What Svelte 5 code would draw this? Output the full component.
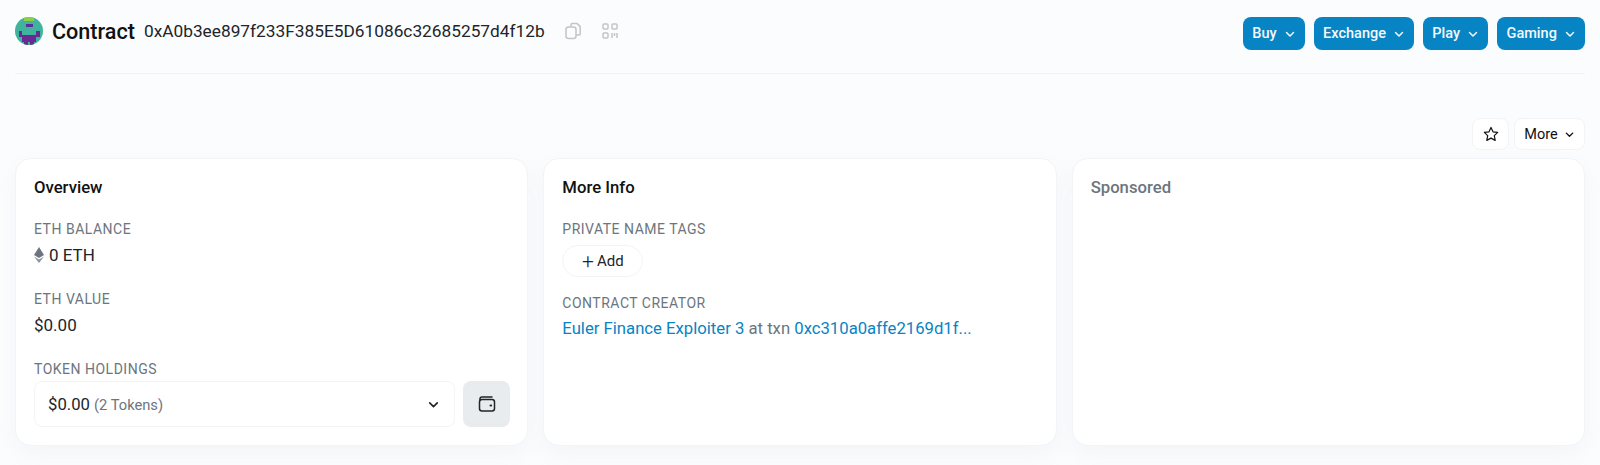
<script lang="ts">
  const menus = ['Buy', 'Exchange', 'Play', 'Gaming'];
</script>

{#snippet chevron(size: number)}
  <svg class="chev" width={size} height={size} viewBox="0 0 12 12" fill="none" stroke="currentColor" stroke-width="1.5" stroke-linecap="round" stroke-linejoin="round"><path d="M2.5 4.5 6 8l3.5-3.5" /></svg>
{/snippet}

<div class="page">
  <header class="top">
    <div class="title">
      <svg class="avatar" width="28" height="28" viewBox="0 0 8 8" shape-rendering="crispEdges">
        <defs><clipPath id="round"><circle cx="4" cy="4" r="4" /></clipPath></defs>
        <g clip-path="url(#round)">
          <rect width="8" height="8" fill="#3fb39b" />
          <rect x="2.5" y="0" width="3" height="1" fill="#8ccf45" />
          <rect x="3" y="2" width="2" height=".8" fill="#5b2d9a" />
          <rect x="1" y="4" width="1" height="1.6" fill="#6a2a94" />
          <rect x="6" y="4" width="1" height="1.6" fill="#6a2a94" />
          <rect x="2" y="5" width="4" height="2" fill="#6a2a94" />
          <rect x="2.6" y="7" width="1" height="1" fill="#6a2a94" />
          <rect x="4.4" y="7" width="1" height="1" fill="#6a2a94" />
        </g>
      </svg>
      <h1>Contract</h1>
      <span class="addr">0xA0b3ee897f233F385E5D61086c32685257d4f12b</span>
      <svg class="tool first" width="20" height="20" viewBox="0 0 20 20" fill="none" stroke="#c2c5c9" stroke-width="1.5" stroke-linejoin="round"><path d="M8 6V3.8c0-.7.5-1.2 1.2-1.2h5l3 3v7.2c0 .7-.5 1.2-1.2 1.2H13" /><rect x="3" y="6" width="10" height="11.4" rx="2.5" /></svg>
      <svg class="tool" width="18" height="18" viewBox="0 0 18 18" fill="none" stroke="#c2c5c9" stroke-width="1.5"><rect x="2" y="2" width="5" height="5" rx="1" /><rect x="11" y="2" width="5" height="5" rx="1" /><rect x="2" y="11" width="5" height="5" rx="1" /><path d="M11 11v5M13.5 11v3M16 11v5M13.5 16h.01" /></svg>
    </div>
    <nav class="menus">
      {#each menus as menu}
        <button type="button" class="menu">{menu}{@render chevron(12)}</button>
      {/each}
    </nav>
  </header>

  <div class="actions">
    <button type="button" class="ghost star" aria-label="Favourite">
      <svg width="16" height="16" viewBox="0 0 16 16" fill="none" stroke="#111" stroke-width="1.2" stroke-linejoin="round"><path d="M8 1.4 10 5.8l4.7.6-3.4 3.2.9 4.8L8 12.1l-4.2 2.3.9-4.8L1.300 6.400 6 5.800z" /></svg>
    </button>
    <button type="button" class="ghost more">More{@render chevron(11)}</button>
  </div>

  <section class="cards">
    <article class="card">
      <h2>Overview</h2>
      <div class="label">ETH BALANCE</div>
      <div class="value eth">
        <svg width="10" height="16" viewBox="0 0 10 16"><path d="M5 0 0 8l5 3 5-3z" fill="#6c757e" /><path d="M0 9.500 5 16l5-6.500-5 3z" fill="#8c939a" /></svg>
        0 ETH
      </div>
      <div class="label gap">ETH VALUE</div>
      <div class="value">$0.00</div>
      <div class="label gap">TOKEN HOLDINGS</div>
      <div class="holdings">
        <button type="button" class="select">
          <span>$0.00 <small>(2 Tokens)</small></span>
          {@render chevron(13)}
        </button>
        <button type="button" class="wallet" aria-label="Wallet">
          <svg width="18" height="18" viewBox="0 0 18 18" fill="none" stroke="#212529" stroke-width="1.5" stroke-linejoin="round"><path d="M2 5V4C2 2.900 2.900 2 4 2h10" stroke-linecap="round" /><rect x="1.500" y="4.500" width="15" height="11.500" rx="2.500" /><path d="M12.500 10.500h.6" stroke-linecap="round" stroke-width="2" /></svg>
        </button>
      </div>
    </article>

    <article class="card">
      <h2>More Info</h2>
      <div class="label">PRIVATE NAME TAGS</div>
      <button type="button" class="add"><span class="plus">+</span> Add</button>
      <div class="label creator">CONTRACT CREATOR</div>
      <div class="link-row"><a href="#creator">Euler Finance Exploiter 3</a> at txn <a href="#txn">0xc310a0affe2169d1f...</a></div>
    </article>

    <article class="card">
      <h2 class="muted">Sponsored</h2>
    </article>
  </section>
</div>

<style>
  :global(body) {
    background: #fbfcfe;
    font-family: Roboto, "Liberation Sans", sans-serif;
    color: #111;
  }

  .page {
    height: 465px;
    box-sizing: border-box;
    padding: 0 15px;
    overflow: hidden;
  }

  button {
    font-family: inherit;
    cursor: pointer;
  }

  .top {
    display: flex;
    align-items: center;
    justify-content: space-between;
    height: 74px;
    padding-bottom: 6px;
    box-sizing: border-box;
    border-bottom: 1px solid #f2f3f6;
  }

  .title {
    display: flex;
    align-items: center;
    margin-bottom: 5px;
  }

  .avatar {
    margin-right: 9px;
  }

  h1 {
    margin: 0 9px 0 0;
    font-size: 21.600px;
    font-weight: 500;
    color: #111;
  }

  .addr {
    font-size: 17.300px;
    color: #212529;
  }

  .tool.first {
    margin: 0 18px 0 18px;
  }

  .menus {
    display: flex;
    gap: 9.150px;
  }

  .menu {
    display: flex;
    align-items: center;
    gap: 7px;
    height: 33px;
    padding: 0 9.150px;
    border: 0;
    border-radius: 8px;
    background: #0784c3;
    color: #f4f8fb;
    font-size: 14.500px;
    font-weight: 500;
  }

  .actions {
    display: flex;
    justify-content: flex-end;
    gap: 5px;
    margin-top: 44px;
  }

  .ghost {
    display: flex;
    align-items: center;
    justify-content: center;
    height: 32px;
    background: #fff;
    border: 1px solid #f3f4f6;
    border-radius: 8px;
    color: #111;
    font-size: 14.500px;
  }

  .star {
    width: 37px;
    padding: 0;
  }

  .more {
    gap: 6px;
    width: 71px;
    padding: 0;
  }

  .cards {
    display: grid;
    grid-template-columns: repeat(3, 1fr);
    gap: 15px;
    margin-top: 8px;
  }

  .card {
    height: 288px;
    box-sizing: border-box;
    padding: 20px 17px 19px 18px;
    background: #fff;
    border: 1px solid #f3f4f6;
    border-radius: 16px;
    box-shadow: 0 8px 20px rgba(189, 197, 209, 0.12);
  }

  h2 {
    margin: 0 0 24px;
    height: 18px;
    line-height: 18px;
    font-size: 16.700px;
    font-weight: 500;
    color: #111;
  }

  h2.muted {
    color: #6c757e;
  }

  .label {
    height: 16px;
    line-height: 16px;
    font-size: 14px;
    letter-spacing: 0.5px;
    color: #6c757e;
  }

  .label.gap {
    margin-top: 25px;
  }

  .value {
    margin-top: 7px;
    height: 22px;
    line-height: 22px;
    font-size: 17px;
    color: #212529;
  }

  .eth {
    display: flex;
    align-items: center;
    gap: 5px;
  }

  .holdings {
    display: flex;
    gap: 8px;
    margin-top: 4px;
  }

  .select {
    flex: 1;
    display: flex;
    align-items: center;
    justify-content: space-between;
    height: 46px;
    padding: 0 14px 0 13px;
    background: #fff;
    border: 1px solid #f3f4f6;
    border-radius: 8px;
    font-size: 16.700px;
    color: #212529;
    text-align: left;
  }

  small {
    font-size: 14.700px;
    color: #6c757e;
  }

  .wallet {
    display: flex;
    align-items: center;
    justify-content: center;
    width: 47px;
    height: 46px;
    padding: 0;
    border: 0;
    border-radius: 8px;
    background: #e9ecef;
  }

  .add {
    display: flex;
    align-items: center;
    justify-content: center;
    gap: 3px;
    width: 81px;
    height: 32px;
    margin-top: 8px;
    padding: 0;
    background: #fff;
    border: 1px solid #f3f4f6;
    border-radius: 17px;
    font-size: 15px;
    color: #212529;
  }

  .plus {
    font-size: 21px;
    font-weight: 300;
    line-height: 1;
  }

  .label.creator {
    margin-top: 18px;
  }

  .link-row {
    margin-top: 7px;
    height: 22px;
    line-height: 22px;
    font-size: 16.700px;
    color: #6c757e;
  }

  a {
    color: #0784c3;
    text-decoration: none;
  }
</style>
